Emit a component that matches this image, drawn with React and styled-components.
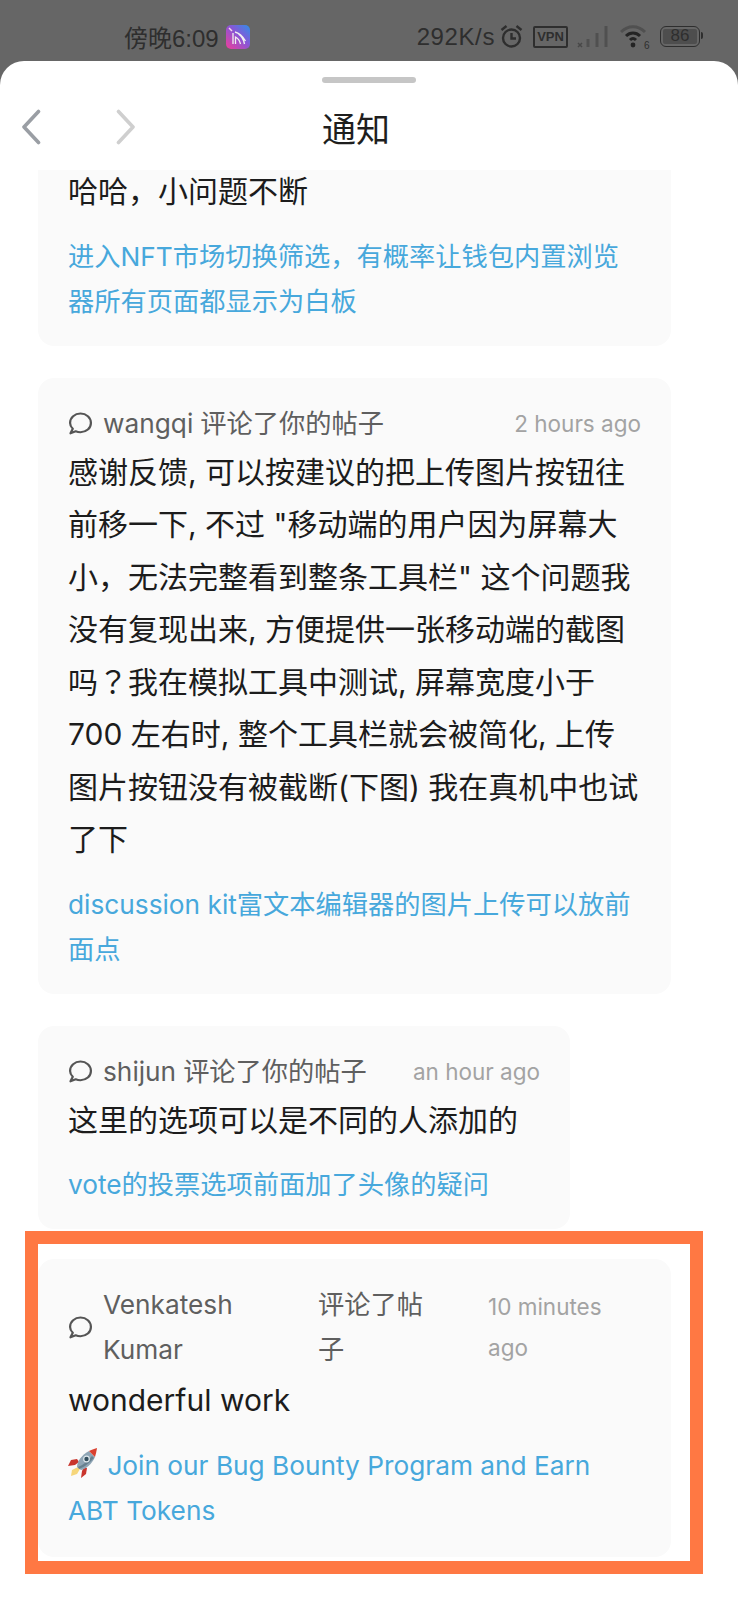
import React from "react";
import styled, { createGlobalStyle } from "styled-components";

const GlobalStyle = createGlobalStyle`
  html, body {
    margin: 0;
    padding: 0;
    background: #666;
  }

  body {
    font-family: Inter, "Noto Sans CJK SC", sans-serif;
  }
`;

// the data below renders this at load time, so it has to come first
const Question = styled.span`
  font-family: "Noto Sans CJK JP", sans-serif;
  line-height: 0;
`;

const notifications = [
  {
    id: 1,
    clipped: true,
    body: "哈哈，小问题不断",
    link: "进入NFT市场切换筛选，有概率让钱包内置浏览器所有页面都显示为白板",
  },
  {
    id: 2,
    name: "wangqi",
    verb: "评论了你的帖子",
    time: "2 hours ago",
    body: (
      <>
        感谢反馈, 可以按建议的把上传图片按钮往前移一下, 不过 "移动端的用户因为屏幕大小，无法完整看到整条工具栏" 这个问题我没有复现出来, 方便提供一张移动端的截图吗<Question>？</Question>我在模拟工具中测试, 屏幕宽度小于 700 左右时, 整个工具栏就会被简化, 上传图片按钮没有被截断(下图) 我在真机中也试了下
      </>
    ),
    link: "discussion kit富文本编辑器的图片上传可以放前面点",
  },
  {
    id: 3,
    narrow: true,
    name: "shijun",
    verb: "评论了你的帖子",
    time: "an hour ago",
    body: "这里的选项可以是不同的人添加的",
    link: "vote的投票选项前面加了头像的疑问",
  },
];

function CommentIcon() {
  return (
    <CommentSvg viewBox="0 0 24 24" aria-hidden="true">
      <path d="M4.6 17C3 15.400 2 13.500 2 11.400 2 6.300 6.500 2.400 12 2.400S22 6.300 22 11.400 17.500 20.400 12 20.400c-1.700 0-3.200-.3-4.600-.9L2.400 21.400z" />
    </CommentSvg>
  );
}

function Rocket() {
  return (
    <RocketIcon viewBox="0 0 30 30" aria-hidden="true">
      <path d="M10 19l-6 3-1 6 6-2 3-5z" fill="#f6d67a" />
      <path d="M9 11l-6 1-3 6 7-1 4-3z" fill="#c9352d" />
      <path d="M19 20l-1 6-5 4 1-7 2-4z" fill="#c9352d" />
      <path d="M9 19C9 13 14 7 21 3l6 6c-3 7-9 12-14 13z" fill="#8fa5b5" />
      <path d="M11 21c6-2 11-7 15-11l-2-2c-4 5-9 9-14 11z" fill="#66808f" />
      <path d="M21 3c2-1 5-2 8-3-.5 3-1 6-2 9z" fill="#d9402f" />
      <circle cx="18.5" cy="11" r="2.8" fill="#34505f" stroke="#dfe7ec" strokeWidth="1.2" />
    </RocketIcon>
  );
}

function StatusBar() {
  return (
    <Status>
      <Clock>
        傍晚6:09
        <AppIcon viewBox="0 0 24 24" aria-hidden="true">
          <defs>
            <linearGradient id="appGradient" x1="0" y1="1" x2="1" y2="0">
              <stop offset="0" stopColor="#ee3f9a" />
              <stop offset="0.55" stopColor="#8a55d6" />
              <stop offset="1" stopColor="#2f8fe8" />
            </linearGradient>
          </defs>
          <rect width="24" height="24" rx="5" fill="url(#appGradient)" />
          <path d="M3 3l3 3" stroke="#f3d9ea" strokeWidth="1.4" />
          <path d="M7 19V8M9.5 19v-7c2 1 4 3 5 7M12.5 9c3 2 5 5 6 10M9 7c4 1 8 5 10.500 9" stroke="#f1f1f1" strokeWidth="1.3" fill="none" />
        </AppIcon>
      </Clock>
      <Indicators>
        <Speed>292K/s</Speed>
        <StatusIcon $left={5} width="23" height="23" viewBox="0 0 23 23" aria-hidden="true">
          <circle cx="11.500" cy="13" r="8.500" fill="none" stroke="#2e2e2e" strokeWidth="2.400" />
          <path d="M11.500 8v5.500h4.500M1.500 5l5-4M21.500 5l-5-4" fill="none" stroke="#2e2e2e" strokeWidth="2.400" />
        </StatusIcon>
        <VpnBadge>VPN</VpnBadge>
        <StatusIcon $left={9} width="31" height="22" viewBox="0 0 31 22" aria-hidden="true">
          <path d="M1 17l4 4M5 17l-4 4" stroke="#484848" strokeWidth="1.500" />
          <path d="M11 21v-8M20 21V7M29 21V0" stroke="#505050" strokeWidth="3" />
        </StatusIcon>
        <StatusIcon $left={12} width="30" height="26" viewBox="0 0 30 26" aria-hidden="true">
          <path d="M1 8c7-7 17-7 24 0" fill="none" stroke="#505050" strokeWidth="3" />
          <path d="M6 12c4-4 10-4 14 0M10 16c2-2 4-2 6 0" fill="none" stroke="#242424" strokeWidth="3" />
          <circle cx="13" cy="21" r="2.400" fill="#242424" />
          <text x="24" y="25" fontSize="10" fill="#2e2e2e" fontFamily="Liberation Sans, sans-serif">6</text>
        </StatusIcon>
        <Battery>
          <BatteryLevel>86</BatteryLevel>
        </Battery>
      </Indicators>
    </Status>
  );
}

function Notification({ item }) {
  return (
    <Card $narrow={item.narrow} $clipped={item.clipped}>
      {item.name && (
        <Meta>
          <MetaLead>
            <CommentIcon />
            <Name>{item.name}</Name>
            <span>{item.verb}</span>
          </MetaLead>
          <Time>{item.time}</Time>
        </Meta>
      )}
      <Body>{item.body}</Body>
      <Link>{item.link}</Link>
    </Card>
  );
}

export default function App() {
  return (
    <>
      <GlobalStyle />
      <Page>
        <StatusBar />
        <Sheet>
          <Handle />
          <Header>
            <NavChevron $tone="#9a9ea4" viewBox="0 0 20 36" aria-hidden="true">
              <path d="M17.500 2.500L3 18l14.500 15.500" />
            </NavChevron>
            <NavChevron $tone="#cfcfcf" $next viewBox="0 0 20 36" aria-hidden="true">
              <path d="M2.500 2.500L17 18 2.500 33.500" />
            </NavChevron>
            <Title>通知</Title>
          </Header>
          <List>
            {notifications.map((item) => (
              <Notification key={item.id} item={item} />
            ))}
            <Highlighted>
              <HighlightedCard>
                <WrappedMeta>
                  <CommentIcon />
                  <WrappedCell $width={215}>Venkatesh Kumar</WrappedCell>
                  <WrappedCell $width={170}>评论了帖子</WrappedCell>
                  <WrappedTime>10 minutes ago</WrappedTime>
                </WrappedMeta>
                <Body>wonderful work</Body>
                <Link>
                  <Rocket /> Join our Bug Bounty Program and Earn ABT Tokens
                </Link>
              </HighlightedCard>
              <Frame />
            </Highlighted>
          </List>
        </Sheet>
      </Page>
    </>
  );
}

const Page = styled.div`
  width: 738px;
  height: 1600px;
  overflow: hidden;
  background: #666;
  display: flex;
  flex-direction: column;
`;

const Status = styled.div`
  height: 61px;
  flex: none;
  box-sizing: border-box;
  padding: 12px 38px 0 124px;
  display: flex;
  align-items: center;
  justify-content: space-between;
  color: #2e2e2e;
  font-family: "Liberation Sans", "Noto Sans CJK SC", sans-serif;
  font-size: 24px;
`;

const Clock = styled.div`
  display: flex;
  align-items: center;
  gap: 7px;
`;

const AppIcon = styled.svg`
  width: 24px;
  height: 24px;
`;

const Indicators = styled.div`
  display: flex;
  align-items: center;
`;

const Speed = styled.span`
  letter-spacing: 0.6px;
`;

const StatusIcon = styled.svg`
  flex: none;
  margin-left: ${(p) => p.$left}px;
`;

const VpnBadge = styled.span`
  width: 35px;
  height: 22px;
  margin-left: 10px;
  box-sizing: border-box;
  border: 2px solid #2e2e2e;
  border-radius: 2px;
  font-size: 13px;
  font-weight: 700;
  display: flex;
  align-items: center;
  justify-content: center;
`;

const Battery = styled.span`
  position: relative;
  width: 40px;
  height: 21px;
  margin-left: 10px;
  box-sizing: border-box;
  border: 1.5px solid #2e2e2e;
  border-radius: 6px;
  padding: 2px;
  display: flex;

  &::after {
    content: "";
    position: absolute;
    top: 5px;
    right: -4px;
    width: 2px;
    height: 7px;
    border-radius: 0 2px 2px 0;
    background: #2e2e2e;
  }
`;

const BatteryLevel = styled.span`
  flex: 1;
  background: #4e4e4e;
  border-radius: 2px;
  font-size: 17px;
  line-height: 14px;
  text-align: center;
`;

const Sheet = styled.div`
  flex: 1;
  min-height: 0;
  background: #fff;
  border-radius: 24px 24px 0 0;
  display: flex;
  flex-direction: column;
`;

const Handle = styled.div`
  width: 94px;
  height: 6px;
  flex: none;
  margin: 16px auto 0;
  border-radius: 3px;
  background: #c6c6c6;
`;

const Header = styled.div`
  height: 87px;
  flex: none;
  padding-left: 21px;
  display: flex;
  align-items: center;
`;

const NavChevron = styled.svg`
  width: 20px;
  height: 36px;
  flex: none;
  margin-left: ${(p) => (p.$next ? "75px" : "0")};

  path {
    fill: none;
    stroke: ${(p) => p.$tone};
    stroke-width: 3.6;
    stroke-linecap: round;
    stroke-linejoin: round;
  }
`;

const Title = styled.h1`
  margin: 6px 0 0 186px;
  font-size: 34px;
  font-weight: 400;
  line-height: 50px;
  color: #1e1e1e;
`;

const List = styled.div`
  flex: 1;
  min-height: 0;
  overflow: hidden;
  padding: 0 67px 0 38px;
  display: flex;
  flex-direction: column;
  align-items: flex-start;
  gap: 32px;
`;

const Card = styled.div`
  box-sizing: border-box;
  width: ${(p) => (p.$narrow ? "fit-content" : "100%")};
  padding: ${(p) => (p.$clipped ? "0" : "23px")} 30px 22px;
  margin-top: ${(p) => (p.$clipped ? "-5px" : "0")};
  background: #fafafa;
  border-radius: 16px;
  ${(p) => p.$clipped && "border-top-left-radius: 0; border-top-right-radius: 0;"}
`;

const HighlightedCard = styled(Card)`
  padding-bottom: 24px;
`;

const Meta = styled.div`
  display: flex;
  align-items: center;
  justify-content: space-between;
  gap: 46px;
  font-size: 26.25px;
  line-height: 45px;
  color: #5f5f5f;
`;

const MetaLead = styled.div`
  display: flex;
  align-items: center;
  gap: 7px;
  white-space: nowrap;
`;

const Name = styled.span`
  margin-left: 3px;
`;

const CommentSvg = styled.svg`
  width: 25px;
  height: 25px;
  flex: none;

  path {
    fill: none;
    stroke: #555;
    stroke-width: 2.1;
    stroke-linejoin: round;
  }
`;

const Time = styled.span`
  font-size: 22.5px;
  color: #a3a3a3;
  white-space: nowrap;
`;

const WrappedMeta = styled(Meta)`
  justify-content: flex-start;
  gap: 0;
  margin-bottom: 2px;
`;

const WrappedCell = styled.span`
  width: ${(p) => p.$width}px;
  box-sizing: border-box;
  padding: 0 ${(p) => (p.$width > 200 ? 60 : 48)}px 0 10px;
  flex: none;
`;

const WrappedTime = styled.span`
  flex: 1;
  margin-left: 10px;
  padding-right: 24px;
  font-size: 22.5px;
  line-height: 41px;
  color: #a3a3a3;
`;

const Body = styled.div`
  font-size: 30px;
  line-height: 52.5px;
  color: #1c1c1c;
`;

const Link = styled.div`
  margin-top: 16px;
  font-size: 26.25px;
  line-height: 45px;
  color: #47a8dc;
`;

const RocketIcon = styled.svg`
  width: 30px;
  height: 30px;
  margin-right: 2px;
  vertical-align: -3px;
`;

const Highlighted = styled.div`
  position: relative;
  width: 100%;
  margin-top: -2px;
`;

const Frame = styled.div`
  position: absolute;
  top: -28px;
  right: -32px;
  bottom: -17px;
  left: -13px;
  border: 13px solid #ff7843;
  pointer-events: none;
`;
